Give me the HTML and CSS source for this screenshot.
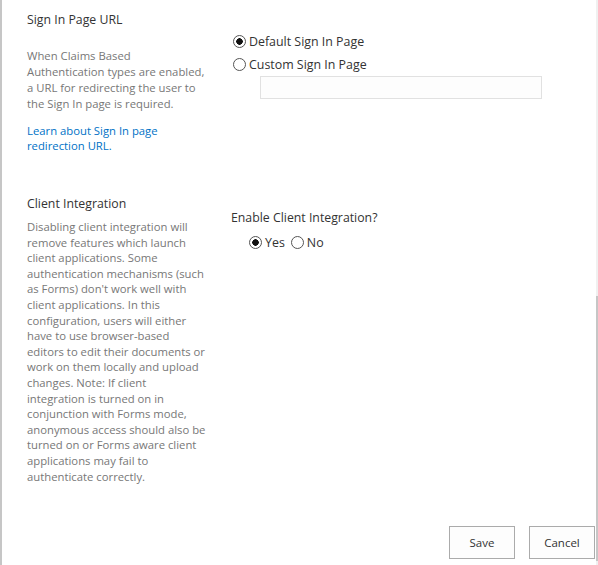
FILE: index.html
```html
<!DOCTYPE html>
<html lang="en">
<head>
  <meta charset="UTF-8" />
  <title>Authentication Providers</title>
  <link rel="stylesheet" href="styles.css">
</head>
<body>
  <div class="pagina">
    <div class="conteudo">
      <!-- Sign In Page URL -->
      <div class="secao secao-url">
        <div class="descricao">
          <h3>Sign In Page URL</h3>
          <p>When Claims Based Authentication types are enabled, a URL for redirecting the user to the Sign In page is required.</p>
          <a href="#">Learn about Sign In page redirection URL.</a>
        </div>
        <div class="campos">
          <label class="opcao"><input type="radio" name="signin" checked> Default Sign In Page</label>
          <label class="opcao"><input type="radio" name="signin"> Custom Sign In Page</label>
          <input type="text" class="texto" disabled>
        </div>
      </div>

      <!-- Client Integration -->
      <div class="secao secao-cliente">
        <div class="descricao">
          <h3>Client Integration</h3>
          <p>Disabling client integration will remove features which launch client applications. Some authentication mechanisms (such as Forms) don't work well with client applications. In this configuration, users will either have to use browser-based editors to edit their documents or work on them locally and upload changes. Note: If client integration is turned on in conjunction with Forms mode, anonymous access should also be turned on or Forms aware client applications may fail to authenticate correctly.</p>
        </div>
        <div class="campos">
          <div class="pergunta">Enable Client Integration?</div>
          <div class="linha-radios">
            <label class="opcao"><input type="radio" name="cliente" checked>Yes</label>
            <label class="opcao"><input type="radio" name="cliente">No</label>
          </div>
        </div>
      </div>

      <div class="botoes">
        <button>Save</button>
        <button>Cancel</button>
      </div>
    </div>

    <div class="rolagem"><div class="barra"></div></div>
  </div>
</body>
</html>
```

FILE: styles.css
```css
html, body {
  margin: 0;
  height: 100%;
}

body {
  font-family: "Open Sans", sans-serif;
  font-size: 11.3px;
  color: #444;
  background: #fff;
}

.pagina {
  display: flex;
  width: 598px;
  height: 565px;
  border-left: 2px solid #c6c6c6;
  box-sizing: border-box;
}

.conteudo {
  flex: 1;
  display: flex;
  flex-direction: column;
  padding-left: 25px;
}

.secao {
  display: grid;
  grid-template-columns: 179px 1fr;
  column-gap: 25px;
}

.secao-url {
  padding-top: 11px;
  height: 184px;
}

.descricao h3 {
  margin: 0;
  font-size: 12.3px;
  font-weight: normal;
  color: #333;
  line-height: 18px;
}

.descricao p {
  margin: 0;
  color: #777;
  line-height: 15.6px;
}

.secao-url .descricao p {
  margin-top: 19px;
  line-height: 16px;
}

.descricao a {
  display: block;
  margin-top: 11px;
  color: #0072c6;
  text-decoration: none;
  line-height: 15px;
}

.secao-cliente .descricao p {
  margin-top: 6px;
}

.campos {
  display: flex;
  flex-direction: column;
  align-items: flex-start;
}

.secao-url .campos {
  padding-top: 19px;
}

.opcao {
  display: flex;
  align-items: center;
  font-size: 12.4px;
  line-height: 23px;
  color: #333;
}

input[type="radio"] {
  appearance: none;
  width: 13px;
  height: 13px;
  margin: 0 3px 0 2px;
  border: 1px solid #555;
  border-radius: 50%;
  box-sizing: border-box;
  background: #fff;
}

input[type="radio"]:checked {
  background: radial-gradient(circle, #111 0 3px, #fff 3.5px);
}

.texto {
  margin: 0 0 0 29px;
  width: 282px;
  height: 23px;
  box-sizing: border-box;
  border: 1px solid #e1e1e1;
  background: #fdfdfd;
}

.secao-cliente .campos {
  padding-top: 14px;
}

.pergunta {
  font-size: 12.3px;
  line-height: 18px;
  color: #333;
}

.linha-radios {
  display: flex;
  gap: 4px;
  margin-left: 16px;
  margin-top: 4px;
}

.botoes {
  margin-top: auto;
  margin-bottom: 6px;
  padding-right: 1px;
  display: flex;
  justify-content: flex-end;
  gap: 14px;
}

button {
  width: 66px;
  height: 33px;
  font-family: "Open Sans", sans-serif;
  font-size: 11.5px;
  color: #333;
  background: #fdfdfd;
  border: 1px solid #ababab;
}

.rolagem {
  width: 2px;
  background: #f0f0f0;
  display: flex;
  flex-direction: column;
  justify-content: flex-end;
}

.barra {
  height: 265px;
  margin-bottom: 4px;
  background: #c6c6c6;
}
```
